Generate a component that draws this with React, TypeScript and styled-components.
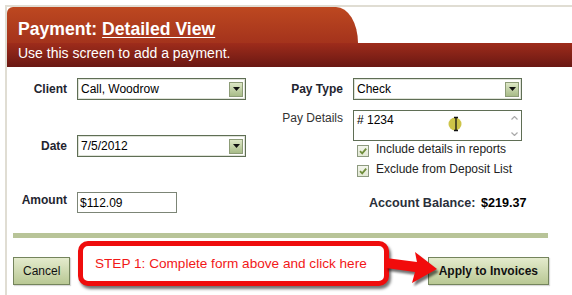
import styled, { createGlobalStyle } from "styled-components"

const GlobalStyle = createGlobalStyle`
  html, body { margin: 0; padding: 0; background: #fff; }
  body {
    font-family: "Liberation Sans", Arial, sans-serif;
    font-size: 12px;
    color: #1f2530;
  }
`

const Caret = () => (
  <svg width="7" height="4" viewBox="0 0 7 4">
    <path d="M0 0H7L3.5 4Z" fill="#111" />
  </svg>
)

const Tick = () => (
  <svg width="10" height="10" viewBox="0 0 10 10">
    <path d="M2 5.2L4.2 7.4L8.2 2.6" fill="none" stroke="#6f8d3b" strokeWidth="1.8" />
  </svg>
)

const Chevron = ({ down }: { down?: boolean }) => (
  <svg width="7" height="4" viewBox="0 0 7 4">
    <path d={down ? "M0.5 0.5L3.5 3.5L6.5 0.5" : "M0.5 3.5L3.5 0.5L6.5 3.5"} fill="none" stroke="#a9a9a9" strokeWidth="1.2" />
  </svg>
)

const Select = ({ value }: { value: string }) => (
  <SelectBox>
    <span>{value}</span>
    <DropButton>
      <Caret />
    </DropButton>
  </SelectBox>
)

const Check = ({ label }: { label: string }) => (
  <CheckRow>
    <CheckBox>
      <Tick />
    </CheckBox>
    <span>{label}</span>
  </CheckRow>
)

const App = () => {
  return (
    <Page>
      <GlobalStyle />
      <Frame>
        <TabRow>
          <Tab>
            <Title>
              Payment: <u>Detailed View</u>
            </Title>
          </Tab>
        </TabRow>
        <Band>Use this screen to add a payment.</Band>

        <Form>
          <LeftCol>
            <Row $label={60}>
              <Label>Client</Label>
              <Select value="Call, Woodrow" />
            </Row>
            <Row $label={60}>
              <Label>Date</Label>
              <Select value="7/5/2012" />
            </Row>
            <Row $label={60}>
              <Label $raised>Amount</Label>
              <TextInput>$112.09</TextInput>
            </Row>
          </LeftCol>

          <RightCol>
            <Row $label={67}>
              <Label>Pay Type</Label>
              <Select value="Check" />
            </Row>
            <Row $label={67} $gap={10}>
              <Label $raised $plain>Pay Details</Label>
              <TextArea>
                <span># 1234</span>
                <ScrollBar>
                  <Chevron />
                  <Chevron down />
                </ScrollBar>
              </TextArea>
            </Row>
            <Checks>
              <Check label="Include details in reports" />
              <Check label="Exclude from Deposit List" />
            </Checks>
            <Balance>
              Account Balance: <strong>$219.37</strong>
            </Balance>
          </RightCol>
        </Form>

        <Divider />

        <Footer>
          <Button>Cancel</Button>
          <Button $primary>Apply to Invoices</Button>
        </Footer>
      </Frame>

      <Callout>STEP 1: Complete form above and click here</Callout>
      <Arrow width="70" height="50" viewBox="380 246 70 50">
        <defs>
          <filter id="blur" x="-20%" y="-20%" width="140%" height="140%">
            <feGaussianBlur stdDeviation="1.2" />
          </filter>
        </defs>
        <polygon
          points="386,258 417,262 415,252 437,269 412,283 415,272 386,268"
          fill="rgba(0,0,0,0.55)"
          transform="translate(2 3)"
          filter="url(#blur)"
        />
        <polygon points="386,258 417,262 415,252 437,269 412,283 415,272 386,268" fill="#f20c0c" />
      </Arrow>
      <Cursor width="16" height="18" viewBox="0 0 16 18">
        <circle cx="7" cy="9" r="6.5" fill="rgba(196,186,40,0.85)" />
        <path d="M6 2.5H10M8 2.5V15.5M6 15.5H10" stroke="#111" strokeWidth="1.3" fill="none" />
      </Cursor>
    </Page>
  )
}

export default App

const Page = styled.div`
  position: relative;
  width: 572px;
  height: 295px;
  overflow: hidden;
  background: #fff;
`

const Frame = styled.div`
  margin: 5px 0 0 5px;
  height: 290px;
  box-sizing: border-box;
  border-top: 2px solid #e0ddd3;
  border-left: 2px solid #e0ddd3;
`

const TabRow = styled.div`
  height: 36px;
  display: flex;
`

const Tab = styled.div`
  width: 351px;
  box-sizing: border-box;
  padding: 12px 0 0 11px;
  border-radius: 6px 22px 0 0 / 6px 36px 0 0;
  background: linear-gradient(#bd4820, #a4331c);
`

const Title = styled.h1`
  margin: 0;
  font-size: 17.6px;
  line-height: 20px;
  font-weight: bold;
  color: #fff;

  u {
    text-underline-offset: 2px;
  }
`

const Band = styled.div`
  height: 24px;
  box-sizing: border-box;
  padding: 2px 0 0 11px;
  font-size: 14px;
  line-height: 16px;
  color: #fff;
  background: linear-gradient(#9e2c1b, #6a1813);
`

const Form = styled.div`
  display: flex;
  gap: 30px;
  padding-top: 11px;
`

const LeftCol = styled.div`
  display: flex;
  flex-direction: column;
  gap: 35px;
`

const RightCol = styled.div`
  display: flex;
  flex-direction: column;
`

const Row = styled.div<{ $label: number; $gap?: number }>`
  display: grid;
  grid-template-columns: ${(p) => p.$label}px 169px;
  column-gap: 10px;
  align-items: center;
  margin-top: ${(p) => p.$gap ?? 0}px;
`

const Label = styled.div<{ $raised?: boolean; $plain?: boolean }>`
  text-align: right;
  font-weight: ${(p) => (p.$plain ? "normal" : "bold")};
  color: ${(p) => (p.$plain ? "#333" : "#1f2530")};
  line-height: 14px;
  align-self: ${(p) => (p.$raised ? "start" : "center")};
  margin-top: ${(p) => (p.$raised ? "1px" : "0")};
`

const SelectBox = styled.div`
  height: 22px;
  box-sizing: border-box;
  display: flex;
  align-items: center;
  justify-content: space-between;
  padding: 0 2px 0 3px;
  border: 1px solid #5f6e55;
  box-shadow: inset 0 0 0 1px #dfe3d8;
  background: #fff;
  color: #000;
`

const DropButton = styled.div`
  width: 14px;
  height: 15px;
  box-sizing: border-box;
  display: flex;
  align-items: center;
  justify-content: center;
  border: 1px solid #8d9c77;
  background: linear-gradient(#dde7c6, #a8bc88);
`

const TextInput = styled.div`
  width: 100px;
  height: 21px;
  box-sizing: border-box;
  padding: 0 2px;
  display: flex;
  align-items: center;
  border: 1px solid #7c8576;
  color: #000;
`

const TextArea = styled.div`
  height: 31px;
  box-sizing: border-box;
  display: flex;
  justify-content: space-between;
  border: 1px solid #5f6e55;
  color: #000;

  span {
    padding: 2px 3px;
    line-height: 14px;
  }
`

const ScrollBar = styled.div`
  width: 13px;
  display: flex;
  flex-direction: column;
  align-items: center;
  justify-content: space-between;
  padding: 5px 0 4px;
`

const Checks = styled.div`
  display: flex;
  flex-direction: column;
  gap: 6px;
  margin: 2px 0 0 81px;
`

const CheckRow = styled.div`
  display: flex;
  align-items: flex-start;
  gap: 7px;
  line-height: 12px;
  color: #222;
`

const CheckBox = styled.div`
  width: 12px;
  height: 12px;
  margin-top: 2px;
  box-sizing: border-box;
  display: flex;
  align-items: center;
  justify-content: center;
  border: 1px solid #8e9b80;
  background: linear-gradient(#f3f5ec, #e2e8d4);
`

const Balance = styled.div`
  margin: 19px 0 0 93px;
  font-size: 12.6px;
  font-weight: bold;
  line-height: 14px;
  color: #2a2f3a;

  strong {
    margin-left: 2px;
    color: #000;
  }
`

const Divider = styled.div`
  width: 535px;
  height: 5px;
  margin: 20px 0 0 6px;
  background: #b8c498;
`

const Footer = styled.div`
  width: 536px;
  margin: 19px 0 0 6px;
  display: flex;
  justify-content: space-between;
`

const Button = styled.div<{ $primary?: boolean }>`
  height: 28px;
  box-sizing: border-box;
  padding: 0 ${(p) => (p.$primary ? "10px" : "9px")};
  display: flex;
  align-items: center;
  font-size: 12px;
  font-weight: ${(p) => (p.$primary ? "bold" : "normal")};
  color: #111;
  border: 1px solid #74845c;
  background: linear-gradient(#e4ebcd, #b9c894);
  box-shadow: 1px 1px 1px rgba(0, 0, 0, 0.15);
`

const Callout = styled.div`
  position: absolute;
  left: 78px;
  top: 241px;
  width: 311px;
  height: 45px;
  box-sizing: border-box;
  padding-left: 12px;
  display: flex;
  align-items: center;
  font-size: 13.6px;
  color: #f21818;
  background: #fff;
  border: 5px solid #ef0d0d;
  border-radius: 10px;
  box-shadow: 2px 3px 3px rgba(0, 0, 0, 0.55);
`

const Arrow = styled.svg`
  position: absolute;
  left: 380px;
  top: 246px;
`

const Cursor = styled.svg`
  position: absolute;
  left: 448px;
  top: 115px;
`
